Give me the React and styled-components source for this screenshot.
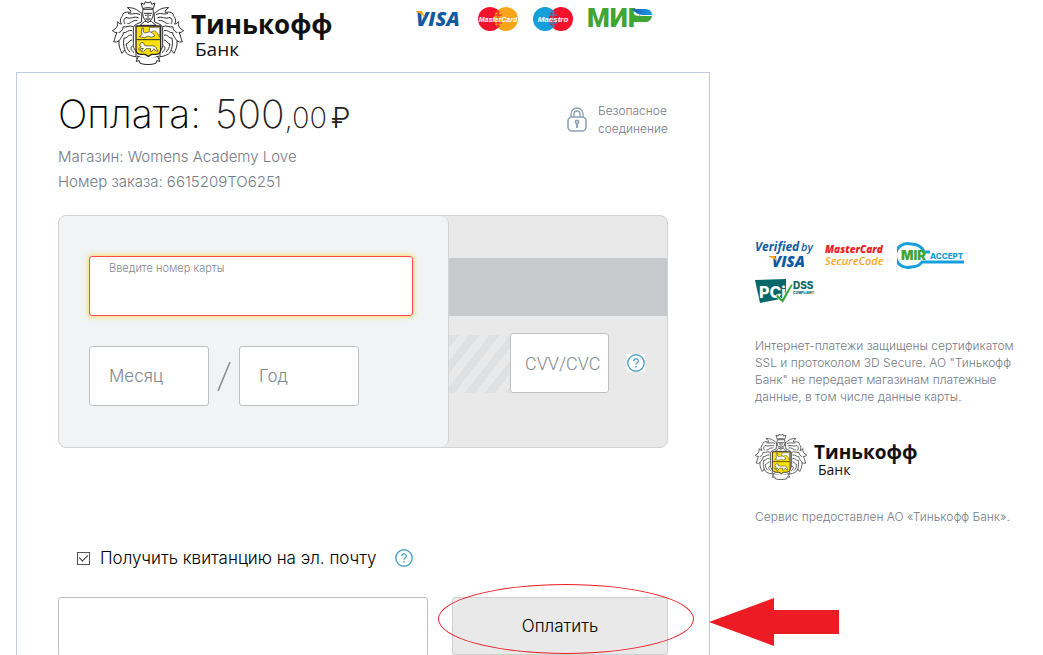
import React, { useState } from 'react';
import styled, { createGlobalStyle } from 'styled-components';

const Crest = ({ width }) => (
  <svg width={width} viewBox='0 0 216 196' aria-hidden='true'>
    <defs>
      <g id={`mantle${width}`}>
        <path d='M90 40C78 34 72 22 46 23C54 28 57 32 56 38C43 33 31 39 32 47C25 54 22 66 29 72C23 72 20 69 17 65C19 78 13 86 1 92C6 97 11 98 15 97C9 107 9 119 5 125C11 127 17 126 21 122C19 135 24 149 30 160C34 157 36 153 38 149C42 164 56 168 72 170L72 154C66 148 63 140 64 130L64 82C66 74 80 70 88 66Z' />
        <path d='M84 44C70 36 62 46 48 40M80 54C66 46 58 60 42 52C34 58 34 66 40 72M76 62C62 58 54 74 46 70M64 80C52 74 44 84 34 80C32 92 26 96 20 98M60 92C48 88 44 100 34 98C34 108 26 112 22 122M60 106C48 102 46 116 36 114C34 126 34 136 38 149M60 120C50 120 50 132 42 132C44 144 48 150 54 156M62 138C54 140 56 150 66 158' />
      </g>
    </defs>
    <g fill='#fff' stroke='#2a2a2a' strokeWidth='3' strokeLinejoin='round'>
      <use href={`#mantle${width}`} />
      <use href={`#mantle${width}`} transform='translate(216 0) scale(-1 1)' />
      <path d='M74 176C86 181 98 184 108 184C118 184 130 181 142 176L140 168C130 173 118 175 108 175C98 175 86 173 76 168Z' />
      <path d='M78 172L72 184L82 182L84 190C100 195 116 195 132 190L134 182L144 184L138 172' />
      <path d='M84 76L98 64L118 64L132 76Z' />
      <path d='M93 28C90 44 93 58 108 68C123 58 126 44 123 28Z' />
      <path d='M96 40H120M108 40V64M99 46H104M112 46H117M101 54L105 60M115 54L111 60' fill='none' />
      <path d='M92 26L87 9L97 13L100 5L108 9L116 5L119 13L129 9L124 26C114 22 102 22 92 26Z' />
      <path
        d='M72 78H146V150C146 160 137 163 129 163H119L109 169L99 163H89C81 163 72 160 72 150Z'
        fill='#fbe00a'
        strokeWidth='4'
      />
      <path d='M74 119H144' />
      <path d='M112 82H143V112C136 96 130 90 122 94L112 100Z' strokeWidth='1.6' />
      <path
        d='M82 110C88 108 92 102 88 96L90 84L94 84V96C98 100 104 98 110 96C118 94 124 100 128 108L118 112L108 108L98 113Z'
        strokeWidth='2'
      />
      <path
        d='M82 136L88 128L94 128L98 136C106 140 118 136 126 138C132 140 134 146 137 154L130 152L126 146L120 154L114 154L116 146L102 146L94 156L88 154L94 145L86 146L84 152L80 146L88 140Z'
        strokeWidth='2'
      />
    </g>
  </svg>
);

const BankBrand = ({ small }) => (
  <Brand $small={small}>
    <Crest width={small ? 52 : 72} />
    <BrandText $small={small}>
      <BrandName $small={small}>Тинькофф</BrandName>
      <BrandKind $small={small}>Банк</BrandKind>
    </BrandText>
  </Brand>
);

const Visa = () => (
  <svg width='48' height='20' viewBox='0 0 48 20' role='img' aria-label='VISA'>
    <text x='0' y='17' fontFamily='Open Sans' fontWeight='800' fontStyle='italic' fontSize='20' fill='#1059a4'>
      VISA
    </text>
    <path d='M0 2H6L9 9C7 6 4 4 0 3Z' fill='#f9a51a' />
  </svg>
);

const Circles = ({ left, right, label }) => (
  <svg width='42' height='24' viewBox='0 0 42 24' role='img' aria-label={label}>
    <circle cx='13' cy='12' r='12' fill={left} />
    <circle cx='29' cy='12' r='12' fill={right} />
    <path d='M21 3V21M18 5H23M17 8H25M17 16H25M18 19H23' stroke={left} strokeWidth='1' />
    <text
      x='21'
      y='15'
      textAnchor='middle'
      fontFamily='Liberation Sans'
      fontStyle='italic'
      fontWeight='700'
      fontSize={label === 'Maestro' ? 8 : 7}
      fill='#fff'
    >
      {label}
    </text>
  </svg>
);

const Mir = () => (
  <svg width='68' height='24' viewBox='0 0 68 24' role='img' aria-label='МИР'>
    <defs>
      <linearGradient id='mir'>
        <stop offset='0' stopColor='#1b5fb0' />
        <stop offset='1' stopColor='#1b9ae0' />
      </linearGradient>
    </defs>
    <text x='0' y='20' fontFamily='Roboto' fontWeight='900' fontSize='26' fill='#3fa535'>
      МИР
    </text>
    <path d='M48 0H66V9H54C51 8 49 5 48 0Z' fill='#fff' />
    <path d='M45 2H58C63 2 65 5 65 8H56C51 8 48 5 45 2Z' fill='url(#mir)' />
    <path d='M46 6C48 9 51 9 54 9H65C64 13 62 15 58 15H46Z' fill='#3fa535' />
  </svg>
);

const VerifiedByVisa = () => (
  <svg width='60' height='30' viewBox='0 0 60 30' role='img' aria-label='Verified by VISA'>
    <g fontFamily='Open Sans' fontStyle='italic' fill='#1059a4'>
      <text x='0' y='11' fontWeight='700' fontSize='12'>
        Verified
      </text>
      <text x='46' y='11' fontWeight='600' fontSize='11'>
        by
      </text>
      <text x='17' y='27' fontWeight='800' fontSize='15'>
        VISA
      </text>
    </g>
    <path d='M14 16H20L22 22C20 19 18 18 14 17Z' fill='#f9a51a' />
  </svg>
);

const SecureCode = () => (
  <svg width='62' height='28' viewBox='0 0 62 28' role='img' aria-label='MasterCard SecureCode'>
    <g fontFamily='Open Sans' fontStyle='italic'>
      <text x='0' y='12' fontWeight='800' fontSize='10' fill='#ee1c25'>
        MasterCard
      </text>
      <text x='0' y='24' fontWeight='600' fontSize='11' fill='#f9a51a'>
        SecureCode
      </text>
    </g>
  </svg>
);

const MirAccept = () => (
  <svg width='72' height='30' viewBox='0 0 72 30' role='img' aria-label='MIR ACCEPT'>
    <path
      d='M33 12H27C25 7 20 4 14 4A12 12 0 1 0 14 27C19 27 23 25 25 22H67'
      fill='none'
      stroke='#15a0dc'
      strokeWidth='3'
    />
    <text x='4' y='20' fontFamily='Inter' fontWeight='900' fontSize='13' fill='#3fa535'>
      MIR
    </text>
    <text x='33' y='19' fontFamily='Inter' fontWeight='800' fontSize='8' fill='#15a0dc'>
      ACCEPT
    </text>
  </svg>
);

const PciDss = () => (
  <svg width='60' height='26' viewBox='0 0 60 26' role='img' aria-label='PCI DSS COMPLIANT'>
    <path d='M0 2L31 1V20L5 25Z' fill='#04676a' />
    <text x='4' y='20' fontFamily='Inter' fontWeight='800' fontSize='16' fill='#fff'>
      PCi
    </text>
    <path d='M22 16L27 21L36 6L38 7L28 25L21 19Z' fill='#2fa637' stroke='#fff' strokeWidth='0.6' />
    <text x='38' y='11' fontFamily='Inter' fontWeight='800' fontSize='10' fill='#04676a'>
      DSS
    </text>
    <text x='38' y='16' fontFamily='Inter' fontWeight='800' fontSize='3.4' fill='#04676a'>
      COMPLIANT
    </text>
  </svg>
);

const LockIcon = () => (
  <svg width='20' height='26' viewBox='0 0 20 26' fill='none' stroke='#8fa3b5' aria-hidden='true'>
    <rect x='1' y='10' width='18' height='14' rx='4' strokeWidth='1.6' />
    <path d='M4 10V7a6 6 0 0 1 12 0v3M7 10V7a3 3 0 0 1 6 0v3' strokeWidth='1.4' />
    <circle cx='10' cy='15' r='1.6' strokeWidth='1.6' />
    <path d='M10 17v4' strokeWidth='2' />
  </svg>
);

const Help = ({ label, filled }) => (
  <HelpButton type='button' aria-label={label} $filled={filled}>
    <svg width='18' height='18' viewBox='0 0 18 18' fill='none' stroke='#4fa3cb' aria-hidden='true'>
      <circle cx='9' cy='9' r='8.2' strokeWidth='1.4' />
      <path d='M6.7 7.2C6.7 4.2 11.4 4.3 11.4 7C11.4 8.8 9 8.7 9 10.8' strokeWidth='1.3' />
      <path d='M9 12v1.5' strokeWidth='1.4' />
    </svg>
  </HelpButton>
);

const App = () => {
  const [receipt, setReceipt] = useState(true);

  return (
    <Page>
      <GlobalStyle />
      <Header>
        <BankBrand />
        <PaymentMarks>
          <Visa />
          <Circles left='#f2122c' right='#f9a51a' label='MasterCard' />
          <Circles left='#149fdb' right='#f2122c' label='Maestro' />
          <Mir />
        </PaymentMarks>
      </Header>

      <Columns>
        <Panel>
          <PanelHead>
            <div>
              <Title>
                Оплата:
                <Amount>
                  500<small>,00</small>
                  <Ruble>₽</Ruble>
                </Amount>
              </Title>
              <Detail>Магазин: Womens Academy Love</Detail>
              <Detail>Номер заказа: 6615209TO6251</Detail>
            </div>
            <Secure>
              <LockIcon />
              <span>
                Безопасное
                <br />
                соединение
              </span>
            </Secure>
          </PanelHead>

          <BankCard>
            <CardFront>
              <NumberField>
                <label htmlFor='card-number'>Введите номер карты</label>
                <input id='card-number' inputMode='numeric' />
              </NumberField>
              <Expiry>
                <TextInput aria-label='Месяц' placeholder='Месяц' />
                <svg width='30' height='60' viewBox='0 0 30 60' aria-hidden='true'>
                  <path d='M9 45L21 16' stroke='#8c8f92' strokeWidth='1.6' />
                </svg>
                <TextInput aria-label='Год' placeholder='Год' />
              </Expiry>
            </CardFront>
            <CardBack>
              <Magnetic />
              <CvvRow>
                <Hatch />
                <CvvInput aria-label='CVV/CVC' placeholder='CVV/CVC' />
                <Help filled label='CVV/CVC' />
              </CvvRow>
            </CardBack>
          </BankCard>

          <Receipt>
            <Checkbox
              id='receipt'
              type='checkbox'
              checked={receipt}
              onChange={(e) => setReceipt(e.target.checked)}
            />
            <label htmlFor='receipt'>Получить квитанцию на эл. почту</label>
            <Help label='Получить квитанцию' />
          </Receipt>

          <Submit>
            <Email type='email' aria-label='Эл. почта' />
            <PayBox>
              <PayButton type='button'>Оплатить</PayButton>
              <Ring />
              <Arrow viewBox='0 0 130 48' aria-hidden='true'>
                <path d='M0 24L65 0V12H130V36H65V48Z' fill='#ed1c24' />
              </Arrow>
            </PayBox>
          </Submit>
        </Panel>

        <Aside>
          <Badges>
            <VerifiedByVisa />
            <SecureCode />
            <MirAccept />
            <PciDss />
          </Badges>
          <Note>
            Интернет-платежи защищены сертификатом SSL и протоколом 3D Secure. АО "Тинькофф Банк" не
            передает магазинам платежные данные, в том числе данные карты.
          </Note>
          <BankBrand small />
          <Note>Сервис предоставлен АО «Тинькофф Банк».</Note>
        </Aside>
      </Columns>
    </Page>
  );
};

const GlobalStyle = createGlobalStyle`
  * {
    box-sizing: border-box;
  }

  body {
    margin: 0;
    background: #fff;
    color: #000;
    font-family: Inter, 'Liberation Sans', sans-serif;
    font-weight: 300;
  }

  svg {
    flex: none;
    display: block;
  }

  input, button {
    font: inherit;
    color: inherit;
  }
`;

const Page = styled.div`
  display: flex;
  flex-direction: column;
  height: 100vh;
  overflow: hidden;
`;

const Header = styled.header`
  display: flex;
  align-items: flex-start;
  gap: 84px;
  flex: none;
  height: 72px;
  padding-left: 112px;
`;

const Brand = styled.div`
  display: flex;
  align-items: flex-start;
  gap: 7px;
`;

const BrandText = styled.div`
  display: flex;
  flex-direction: column;
  padding-top: 7px;
  font-family: 'Open Sans', 'Noto Sans', sans-serif;
  color: #111;
`;

const BrandName = styled.span`
  font-size: ${(props) => (props.$small ? '19px' : '26px')};
  line-height: ${(props) => (props.$small ? '24px' : '34px')};
  font-weight: 700;
`;

const BrandKind = styled.span`
  padding-left: 4px;
  font-size: ${(props) => (props.$small ? '14px' : '19px')};
  line-height: ${(props) => (props.$small ? '12px' : '16px')};
  font-weight: 400;
`;

const PaymentMarks = styled.div`
  display: flex;
  align-items: center;
  gap: 13px;
  padding-top: 7px;
`;

const Columns = styled.div`
  display: grid;
  grid-template-columns: minmax(0, 694px) minmax(0, 264px);
  gap: 45px;
  flex: 1;
  min-height: 0;
  padding-left: 16px;
`;

const Panel = styled.main`
  padding: 20px 41px 0;
  border: 1px solid #bfcbdd;
  border-bottom: none;
`;

const PanelHead = styled.div`
  display: flex;
  justify-content: space-between;
  height: 122px;
`;

const Title = styled.h1`
  display: flex;
  align-items: baseline;
  gap: 14px;
  margin: 0 0 5px;
  font-size: 39px;
  line-height: 42px;
  font-weight: 200;
`;

const Amount = styled.span`
  font-size: 39px;
  color: #222;

  small {
    font-size: 29px;
  }
`;

const Ruble = styled.span`
  margin-left: 4px;
  font-size: 29px;
  font-weight: 300;
`;

const Detail = styled.p`
  margin: 0;
  font-size: 15px;
  line-height: 25px;
  color: #747c88;
`;

const Secure = styled.div`
  display: flex;
  align-items: flex-start;
  gap: 11px;
  padding-top: 9px;
  font-size: 12px;
  line-height: 18px;
  color: #747c88;

  svg {
    margin-top: 5px;
  }
`;

const BankCard = styled.section`
  display: flex;
  border: 1px solid #d2d3d4;
  border-radius: 8px;
  background: #e9e9e9;
`;

const CardFront = styled.div`
  flex: none;
  width: 390px;
  padding: 40px 35px 41px 30px;
  border-right: 1px solid #d2d3d4;
  border-radius: 8px;
  background: #f0f4f5;
`;

const NumberField = styled.div`
  display: flex;
  flex-direction: column;
  height: 60px;
  margin-bottom: 30px;
  padding: 3px 19px;
  border: 1px solid #ff4b4b;
  border-radius: 3px;
  background: #fff;
  box-shadow: 0 0 5px 1px #f7dc6b;

  label {
    font-size: 11px;
    line-height: 16px;
    color: #85888c;
  }

  input {
    flex: 1;
    min-width: 0;
    padding: 0;
    border: none;
    outline: none;
    background: none;
    font-size: 18px;
  }
`;

const Expiry = styled.div`
  display: flex;
`;

const TextInput = styled.input`
  width: 120px;
  height: 60px;
  padding: 0 19px;
  border: 1px solid #bfc0c1;
  border-radius: 3px;
  background: #fff;
  font-size: 17px;

  &::placeholder {
    color: #85888c;
    opacity: 1;
  }
`;

const CvvInput = styled(TextInput)`
  width: 99px;
  padding: 0 4px 0 14px;
  font-family: Roboto, 'Liberation Sans', sans-serif;
  font-size: 18px;
`;

const CardBack = styled.div`
  flex: 1;
  min-width: 0;
  padding-top: 42px;
`;

const Magnetic = styled.div`
  height: 58px;
  background: #c8c9cd;
`;

const CvvRow = styled.div`
  display: flex;
  align-items: center;
  padding-top: 17px;
`;

const Hatch = styled.div`
  align-self: flex-end;
  width: 61px;
  height: 58px;
  background: repeating-linear-gradient(
    128deg,
    #dfe0e1 0 8px,
    #e9e9e9 8px 16px
  );
`;

const HelpButton = styled.button`
  flex: none;
  margin-left: 18px;
  padding: 0;
  border: none;
  background: ${(props) => (props.$filled ? '#fff' : 'none')};
  cursor: pointer;
`;

const Receipt = styled.div`
  display: flex;
  align-items: center;
  height: 24px;
  margin: 98px 0 27px;
  padding-left: 19px;
  font-size: 17px;
`;

const Checkbox = styled.input`
  appearance: none;
  width: 13px;
  height: 13px;
  margin: 0 10px 0 0;
  border: 1px solid #555;
  background: #fff;

  &:checked::after {
    content: '';
    display: block;
    width: 4px;
    height: 7px;
    margin: 0 auto;
    border: solid #222;
    border-width: 0 1px 1px 0;
    transform: rotate(45deg);
  }
`;

const Submit = styled.div`
  display: flex;
  gap: 24px;
`;

const Email = styled.input`
  flex: 1;
  min-width: 0;
  height: 60px;
  padding: 0 19px;
  border: 1px solid #bfc0c1;
  border-radius: 3px;
  background: #fff;
`;

const PayBox = styled.div`
  position: relative;
  flex: none;
  width: 216px;
`;

const PayButton = styled.button`
  width: 100%;
  height: 58px;
  border: 1px solid #d0d0d0;
  border-radius: 3px;
  background: #e9e9e9;
  font-size: 17px;
  cursor: pointer;
`;

/* hand-drawn marks over the pay button */
const Ring = styled.div`
  position: absolute;
  top: -13px;
  left: -14px;
  width: 256px;
  height: 70px;
  border: 1px solid #ed1c24;
  border-radius: 50%;
  pointer-events: none;
`;

const Arrow = styled.svg`
  position: absolute;
  top: 1px;
  left: 257px;
  width: 130px;
  height: 48px;
`;

const Aside = styled.aside`
  display: flex;
  flex-direction: column;
  gap: 28px;
  padding-top: 168px;
`;

const Badges = styled.div`
  display: flex;
  flex-wrap: wrap;
  align-items: center;
  gap: 8px 10px;
  padding-bottom: 5px;
`;

const Note = styled.p`
  margin: 0;
  font-size: 12px;
  line-height: 17px;
  color: #747c88;
`;

export default App;
